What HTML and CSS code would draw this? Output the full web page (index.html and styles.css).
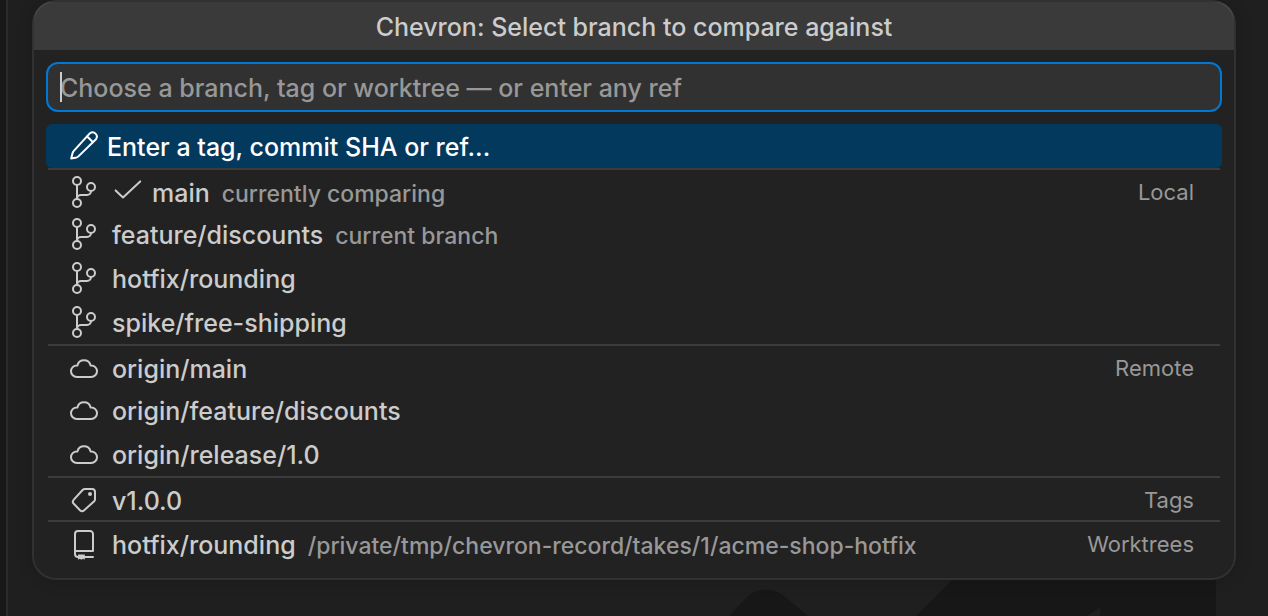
FILE: index.html
```
<!DOCTYPE html>
<html lang="en">
<head>
<meta charset="utf-8">
<title>Chevron: Select branch to compare against</title>
<link rel="stylesheet" href="styles.css">
</head>
<body>
<svg class="symbols" aria-hidden="true">
  <symbol id="branch" viewBox="0 0 16 16"><circle cx="4.5" cy="2.5" r="2"/><circle cx="4.5" cy="13.5" r="2"/><circle cx="11.5" cy="5.5" r="2"/><path d="M4.5 4.5v7a2 2 0 0 1 2-2h3a2 2 0 0 0 2-2"/></symbol>
  <symbol id="cloud" viewBox="0 0 16 16"><path d="M4.4 12.5h7.2a2.9 2.9 0 0 0 0-5.8h-.3a3.4 3.4 0 0 0-6.6 0h-.3a2.9 2.9 0 0 0 0 5.8z"/></symbol>
  <symbol id="tag" viewBox="0 0 16 16"><path d="M8.4 2.5H12A1.5 1.5 0 0 1 13.5 4v3.6a1.5 1.5 0 0 1-.4 1L8.1 13.100a1.500 1.500 0 0 1-2.100 0L2.900 9.900a1.500 1.500 0 0 1 0-2.100l4.500-4.900a1.500 1.500 0 0 1 1-.4z"/><circle class="dot" cx="11" cy="5" r="1"/></symbol>
  <symbol id="repo" viewBox="0 0 16 16"><path d="M5.500 14.500H5A1.500 1.500 0 0 1 3.500 13V3A1.500 1.500 0 0 1 5 1.500h6A1.500 1.500 0 0 1 12.500 3v8.500h-9M8 14.500h4.500"/><path class="dot" d="M5 13.200h3.400v2.700l-.9-.5-.8.500-.8-.5-.9.500z"/></symbol>
  <symbol id="pencil" viewBox="0 0 16 16"><path d="M11 1.600a2.150 2.150 0 0 1 3 3L5.200 13.200a2 2 0 0 1-.9.5L1.600 14.300l.7-2.800a2 2 0 0 1 .5-.9zM9.500 3.100l3 3"/></symbol>
  <symbol id="check" viewBox="0 0 16 16"><path d="M1.800 7.200l3.700 3.500 8.600-8"/></symbol>
</svg>

<main class="workbench">
  <svg class="watermark" viewBox="0 0 500 40" aria-hidden="true"><path d="M13 40 32 20Q50 7 68 20L92 40zM200 40 240 0H500V40H384V31L371 40z"/></svg>

  <section class="picker" aria-labelledby="picker-title">
    <h1 class="title" id="picker-title">Chevron: Select branch to compare against</h1>
    <div class="field">
      <input class="filter" type="text" aria-label="Branch, tag or worktree" placeholder="Choose a branch, tag or worktree — or enter any ref">
      <span class="caret"></span>
    </div>
    <div class="list" role="listbox" aria-labelledby="picker-title">
      <button class="row selected" role="option" aria-selected="true"><svg class="icon"><use href="#pencil"/></svg><span class="label">Enter a tag, commit SHA or ref...</span></button>
      <button class="row first" role="option"><svg class="icon"><use href="#branch"/></svg><svg class="icon check"><use href="#check"/></svg><span class="label">main</span><span class="description">currently comparing</span><span class="group">Local</span></button>
      <button class="row" role="option"><svg class="icon"><use href="#branch"/></svg><span class="label">feature/discounts</span><span class="description">current branch</span></button>
      <button class="row" role="option"><svg class="icon"><use href="#branch"/></svg><span class="label">hotfix/rounding</span></button>
      <button class="row" role="option"><svg class="icon"><use href="#branch"/></svg><span class="label">spike/free-shipping</span></button>
      <button class="row first" role="option"><svg class="icon"><use href="#cloud"/></svg><span class="label">origin/main</span><span class="group">Remote</span></button>
      <button class="row" role="option"><svg class="icon"><use href="#cloud"/></svg><span class="label">origin/feature/discounts</span></button>
      <button class="row" role="option"><svg class="icon"><use href="#cloud"/></svg><span class="label">origin/release/1.0</span></button>
      <button class="row first" role="option"><svg class="icon"><use href="#tag"/></svg><span class="label">v1.0.0</span><span class="group">Tags</span></button>
      <button class="row first" role="option"><svg class="icon"><use href="#repo"/></svg><span class="label">hotfix/rounding</span><span class="description">/private/tmp/chevron-record/takes/1/acme-shop-hotfix</span><span class="group">Worktrees</span></button>
    </div>
  </section>
</main>
</body>
</html>
```
FILE: styles.css
```
* { box-sizing: border-box; }

body {
  margin: 0;
  background: #181818;
  color: #cccccc;
  font-family: Inter, "Liberation Sans", sans-serif;
  font-size: 25px;
  font-weight: 450;
  line-height: 32px;
}

.symbols { position: absolute; width: 0; height: 0; }

.workbench {
  position: relative;
  min-height: 100vh;
  margin-left: 6px;
  padding: 0 32px 0 24px;
  border-left: 2px solid #2b2b2b;
  background: #1f1f1f;
  overflow: hidden;
}

.watermark {
  position: absolute;
  right: 52px;
  bottom: 0;
  width: 500px;
  height: 40px;
  fill: #171717;
}

.picker {
  position: relative;
  padding: 2px 2px 16px;
  border-radius: 24px;
  background: #222222;
  box-shadow: 0 0 16px rgba(0, 0, 0, 0.18);
}

/* Outline drawn above the title bar */
.picker::after {
  content: "";
  position: absolute;
  inset: 0;
  border: 2px solid rgba(255, 255, 255, 0.07);
  border-radius: 24px;
  pointer-events: none;
}

.title {
  margin: 0;
  padding: 9px 8px 7px;
  border-radius: 18px 18px 0 0;
  background: #3a3a3a;
  font-size: 25px;
  font-weight: inherit;
  text-align: center;
}

.field { position: relative; margin: 12px; }

.filter {
  display: block;
  width: 100%;
  height: 50px;
  padding: 2px 12px 0;
  border: 2px solid #0078d4;
  border-radius: 12px;
  outline: 0;
  background: #313131;
  color: #cccccc;
  font: inherit;
}

.filter::placeholder { color: #989898; opacity: 1; }

.caret {
  position: absolute;
  left: 14px;
  top: 10px;
  width: 2px;
  height: 30px;
  background: #cccccc;
}

.list { display: flex; flex-direction: column; padding: 0 12px; }

.row {
  display: flex;
  align-items: center;
  height: 44px;
  padding: 0 28px 0 22px;
  border: 0;
  border-radius: 6px;
  background: none;
  color: inherit;
  font: inherit;
  text-align: left;
  white-space: nowrap;
}

.row.first {
  margin: 0 2px;
  padding: 2px 26px 0 20px;
  border-top: 2px solid #3c3c3c;
  border-radius: 0;
}

.row.selected { background: #04395e; color: #ffffff; }

.icon {
  flex: none;
  width: 32px;
  height: 32px;
  margin-right: 12px;
  fill: none;
  stroke: currentColor;
  stroke-linejoin: round;
  stroke-linecap: round;
}

.selected .icon { margin-right: 7px; }
.check { margin-right: 8px; }
.dot { fill: currentColor; stroke: none; }

.label { padding-top: 2px; }

.description {
  margin-left: 12px;
  padding-top: 4px;
  color: #989898;
  font-size: 23px;
}

.group {
  margin-left: auto;
  color: #989898;
  font-size: 22px;
  font-weight: 400;
}
```
